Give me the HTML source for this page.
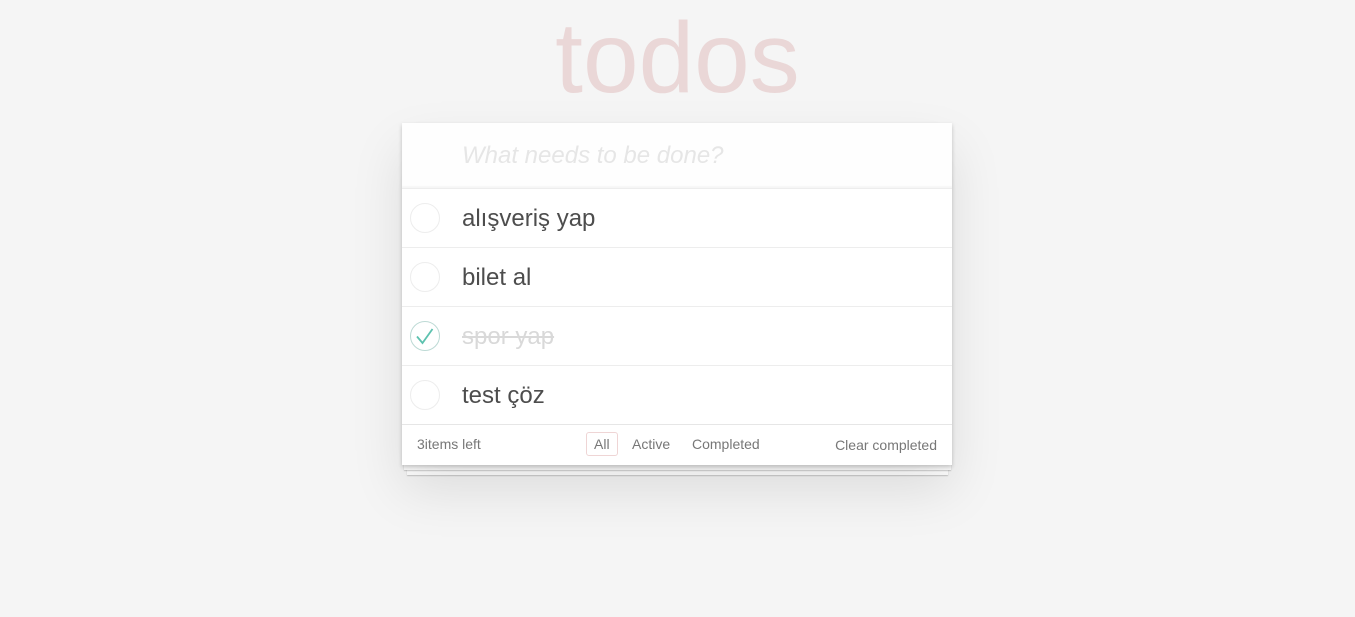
<!DOCTYPE html>
<html><head><meta charset="utf-8"><style>
*{box-sizing:border-box;margin:0;padding:0}
body{width:1355px;height:617px;background:#f5f5f5;font-family:"Liberation Sans",Arial,sans-serif;color:#4d4d4d;position:relative;overflow:hidden}
h1{position:absolute;left:0;width:1355px;top:3px;text-align:center;font-size:100px;font-weight:100;color:rgba(175,47,47,0.15);line-height:110px}
.app{position:absolute;left:402px;top:123px;width:550px;background:#fff;box-shadow:0 2px 4px rgba(0,0,0,.2),0 25px 50px rgba(0,0,0,.1)}
.new{height:65px;padding-left:60px;font-size:24px;font-style:italic;color:#e6e6e6;line-height:65px;box-shadow:inset 0 -2px 1px rgba(0,0,0,.03);background:rgba(0,0,0,.003);font-weight:300}
.item{height:59px;border-top:1px solid #ededed;position:relative;font-size:24px;line-height:60px;padding-left:60px}
.item .c{position:absolute;left:8px;top:14px;width:30px;height:30px;border:1px solid #ededed;border-radius:50%}
.done{color:#d9d9d9;text-decoration:line-through}
.done .c{border-color:#bddad5}
.foot{height:41px;border-top:1px solid #e6e6e6;font-size:14px;color:#777;position:relative}
.foot span{position:absolute;top:11px}
.all{border:1px solid rgba(175,47,47,.2);border-radius:3px;padding:3px 7px;top:7px!important}
.s1,.s2{position:absolute;height:50px;background:#fff;box-shadow:0 1px 1px rgba(0,0,0,.2)}
</style></head><body>
<h1>todos</h1>
<div class="s2" style="left:407px;right:407px;top:425px"></div>
<div class="s1" style="left:404px;right:404px;top:420px"></div>
<div class="app">
<div class="new">What needs to be done?</div>
<div class="item"><div class="c"></div>alışveriş yap</div>
<div class="item"><div class="c"></div>bilet al</div>
<div class="item done"><div class="c"><svg width="30" height="30" style="position:absolute;left:-1px;top:-1px"><path d="M7 15.5 L12.5 22 L22.5 8" fill="none" stroke="#5dc2af" stroke-width="1.8"/></svg></div>spor yap</div>
<div class="item"><div class="c"></div>test çöz</div>
<div class="foot">
<span style="left:15px">3items left</span>
<span class="all" style="left:184px">All</span>
<span style="left:230px">Active</span>
<span style="left:290px">Completed</span>
<span style="right:15px;top:12px">Clear completed</span>
</div>
</div>
</body></html>
